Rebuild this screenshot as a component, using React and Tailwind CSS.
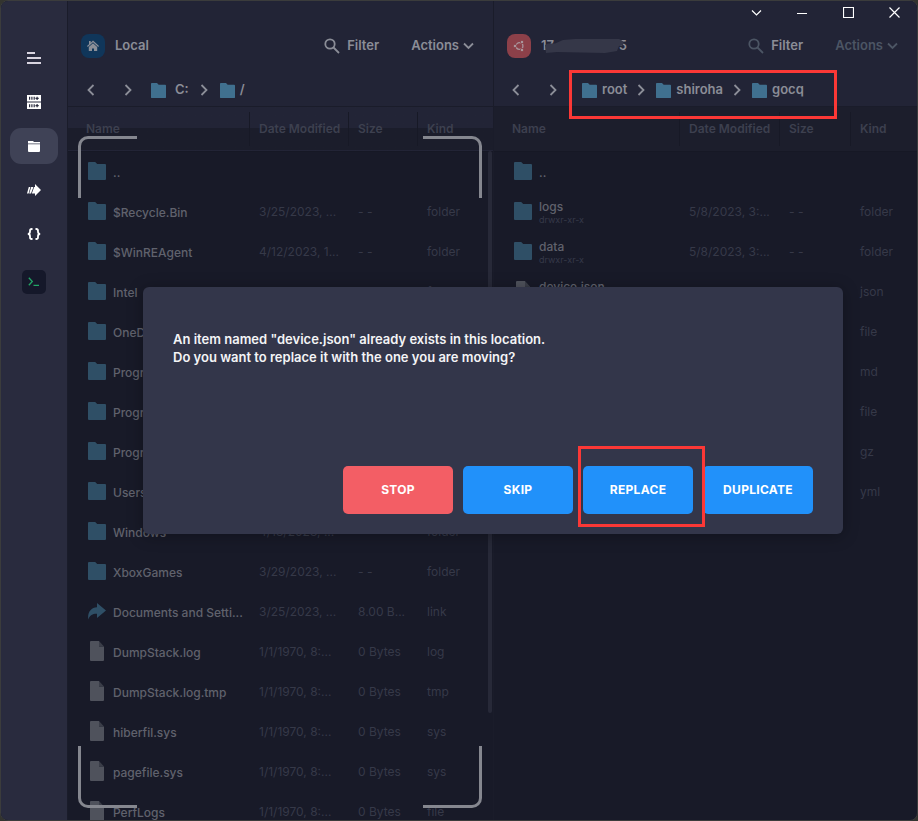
import React from "react";

const FONT = "font-['Inter','Liberation_Sans',sans-serif]";

const leftRows = [
  ["folder", "..", "", "", ""],
  ["folder", "$Recycle.Bin", "3/25/2023, ...", "- -", "folder"],
  ["folder", "$WinREAgent", "4/12/2023, 1...", "- -", "folder"],
  ["folder", "Intel", "3/25/2023, ...", "- -", "folder"],
  ["folder", "OneDriveTemp", "3/25/2023, ...", "- -", "folder"],
  ["folder", "Program Files", "3/25/2023, ...", "- -", "folder"],
  ["folder", "Program Files (x86)", "3/25/2023, ...", "- -", "folder"],
  ["folder", "ProgramData", "3/25/2023, ...", "- -", "folder"],
  ["folder", "Users", "3/25/2023, ...", "- -", "folder"],
  ["folder", "Windows", "4/13/2023, ...", "- -", "folder"],
  ["folder", "XboxGames", "3/29/2023, ...", "- -", "folder"],
  ["link", "Documents and Setti...", "3/25/2023, ...", "8.00 B...", "link"],
  ["file", "DumpStack.log", "1/1/1970, 8:...", "0 Bytes", "log"],
  ["file", "DumpStack.log.tmp", "1/1/1970, 8:...", "0 Bytes", "tmp"],
  ["file", "hiberfil.sys", "1/1/1970, 8:...", "0 Bytes", "sys"],
  ["file", "pagefile.sys", "1/1/1970, 8:...", "0 Bytes", "sys"],
  ["file", "PerfLogs", "1/1/1970, 8:...", "0 Bytes", "file"],
];

const rightRows = [
  ["folder", "..", "", "", "", ""],
  ["folder", "logs", "5/8/2023, 3:...", "- -", "folder", "drwxr-xr-x"],
  ["folder", "data", "5/8/2023, 3:...", "- -", "folder", "drwxr-xr-x"],
  ["file", "device.json", "5/8/2023, 3:...", "", "json", "-rw-r--r--"],
  ["file", "go-cqhttp", "5/8/2023, 3:...", "", "file", "-rwxr-xr-x"],
  ["file", "README.md", "5/8/2023, 3:...", "", "md", "-rw-r--r--"],
  ["file", "LICENSE", "5/8/2023, 3:...", "", "file", "-rw-r--r--"],
  ["file", "go-cqhttp.gz", "5/8/2023, 3:...", "", "gz", "-rw-r--r--"],
  ["file", "config.yml", "5/8/2023, 3:...", "", "yml", "-rw-r--r--"],
];

function Folder({ className }) {
  return (
    <svg className={className} viewBox="0 0 18 18" fill="currentColor" aria-hidden="true">
      <path d="M1 0h6.2l2 2H17a1 1 0 0 1 1 1v14a1 1 0 0 1-1 1H1a1 1 0 0 1-1-1V1a1 1 0 0 1 1-1z" />
    </svg>
  );
}

function FileIcon() {
  return (
    <svg className="h-5 w-[18px]" viewBox="0 0 18 20" aria-hidden="true">
      <path d="M3 0h8v5.5h5V19a1 1 0 0 1-1 1H3a1 1 0 0 1-1-1V1a1 1 0 0 1 1-1z" fill="#4f525c" />
      <path d="M11 0l5 5.5h-5z" fill="#3b3e49" />
    </svg>
  );
}

function LinkIcon() {
  return (
    <svg className="size-[18px] text-[#2f4f66]" viewBox="0 0 18 18" fill="currentColor" aria-hidden="true">
      <path d="M9 1l9 7.500L9 16v-4.300C5 11.500 2 13 .2 17.500-.5 10 3 5.600 9 5.300z" />
    </svg>
  );
}

function RowIcon({ type }) {
  if (type === "folder") return <Folder className="size-[18px] text-[#2f4f66]" />;
  if (type === "link") return <LinkIcon />;
  return <FileIcon />;
}

function Chevron({ dir, className = "" }) {
  const d = { left: "M7.500 1L2.500 6l5 5", right: "M2.500 1l5 5-5 5", down: "M1 3.500l4.500 4.500L10 3.500" }[dir];
  return (
    <svg className={"h-3 w-[11px] shrink-0 " + className} viewBox="0 0 11 12" fill="none" stroke="currentColor" strokeWidth="1.8" aria-hidden="true">
      <path d={d} />
    </svg>
  );
}

function PanelHeader({ badge, title, dim }) {
  const tone = dim ? "text-[#4c5564]" : "text-[#8b8d97]";
  return (
    <div className="flex h-8 items-center pr-[19px] text-[13px] font-semibold text-[#8b8d97]">
      {badge}
      <div className="ml-[10px] flex-1">{title}</div>
      <button className="flex items-center gap-[7px]">
        <svg className={"size-4 " + tone} viewBox="0 0 16 16" fill="none" stroke="currentColor" strokeWidth="1.8" aria-hidden="true">
          <circle cx="6" cy="6" r="4.700" />
          <path d="M9.500 9.500L15 15" />
        </svg>
        Filter
      </button>
      <button className={"ml-8 flex items-center gap-1 " + tone}>
        Actions
        <Chevron dir="down" />
      </button>
    </div>
  );
}

function Crumb({ children }) {
  return (
    <a href="#" className="flex items-center gap-[5px]">
      <Folder className="size-[15px] text-[#40708f]" />
      {children}
    </a>
  );
}

function NavButtons() {
  return (
    <div className="flex gap-[26px]">
      <button aria-label="Back"><Chevron dir="left" /></button>
      <button aria-label="Forward"><Chevron dir="right" /></button>
    </div>
  );
}

function FileTable({ rows, cols, headTone, label }) {
  return (
    <table aria-label={label} className="w-full table-fixed border-collapse text-left text-xs">
      <colgroup>
        <col />
        {cols.map((c, i) => <col key={i} className={c} />)}
      </colgroup>
      <thead>
        <tr className={"h-11 border-b border-[#161825] text-[#3d404f] " + headTone}>
          {["Name", "Date Modified", "Size", "Kind"].map((h, i) => (
            <th key={h} className={"whitespace-nowrap p-0 font-semibold " + (i ? "" : "pl-[18px]")}>
              <div className={i ? "border-l border-[#171926] py-[9px] pl-[9px]" : ""}>{h}</div>
            </th>
          ))}
        </tr>
      </thead>
      <tbody>
        {rows.map(([type, name, date, size, kind, mode], i) => (
          <tr key={i} className="h-10 text-[#363948]">
            <td className="p-0 pl-5">
              <div className="flex items-center gap-[7px]">
                <span className="shrink-0"><RowIcon type={type} /></span>
                <div className={"min-w-0 whitespace-nowrap leading-4 " + (mode ? "pt-px" : "pt-[3px]")}>
                  <div className="font-medium text-[#60626d]">{name}</div>
                  {mode && <div className="text-[9px] leading-[9px]">{mode}</div>}
                </div>
              </div>
            </td>
            <td className="whitespace-nowrap p-0 pl-[10px] pt-px">{date}</td>
            <td className="whitespace-nowrap p-0 pl-[10px] pt-px">{size}</td>
            <td className="whitespace-nowrap p-0 pl-[10px] pt-px">{kind}</td>
          </tr>
        ))}
      </tbody>
    </table>
  );
}

function DropTarget() {
  const corner = "absolute h-[62px] w-[59px] border-[#85878f] ";
  return (
    <div className="pointer-events-none absolute inset-x-0 bottom-0 top-[21px]">
      <div className="absolute bottom-3 left-[10px] right-[11px] top-2">
        <div className={corner + "left-0 top-0 rounded-tl-[10px] border-l-3 border-t-3"} />
        <div className={corner + "right-0 top-0 rounded-tr-[10px] border-r-3 border-t-3"} />
        <div className={corner + "bottom-0 left-0 rounded-bl-[10px] border-b-3 border-l-3"} />
        <div className={corner + "bottom-0 right-0 rounded-br-[10px] border-b-3 border-r-3"} />
      </div>
    </div>
  );
}

function WindowControls() {
  const icons = [
    ["More", "M1 3.500L5.500 8 10 3.500"],
    ["Minimize", "M0 6.500h10"],
    ["Maximize", "M.5.5h10v10H.5z"],
    ["Close", "M.5.5l10 10M10.500.5l-10 10"],
  ];
  return (
    <div className="flex h-[30px] justify-end">
      {icons.map(([label, d]) => (
        <button key={label} aria-label={label} className="flex h-[22px] w-[46px] items-center justify-center text-white">
          <svg className="size-[11px]" viewBox="0 0 11 11" fill="none" stroke="currentColor" strokeWidth="1.2"><path d={d} /></svg>
        </button>
      ))}
    </div>
  );
}

function Sidebar() {
  const item = "flex h-9 w-12 items-center justify-center rounded-[11px] text-white ";
  return (
    <nav className="flex w-[66px] shrink-0 flex-col items-center gap-2 bg-[#292b3e] pt-[39px]">
      <button aria-label="Menu" className={item}>
        <svg className="h-3 w-3.5" viewBox="0 0 14 12" stroke="#d8d4df" strokeWidth="1.800"><path d="M0 1h8M0 6h14M0 11h14" /></svg>
      </button>
      <button aria-label="Hosts" className={item}>
        <svg className="size-3.5" viewBox="0 0 14 14" fill="currentColor">
          <path fillRule="evenodd" d="M0 0h14v6.500H0zM2 1.800v3h1.200v-3zM4.300 1.800v3h1.200v-3zM6.600 1.800v3h1.200v-3zM9.500 2.700h-1v1.200h1v1h1.200v-1h1V2.700h-1v-1H9.500zM0 7.500h14V14H0zM2 9.200v3h1.200v-3zM4.300 9.200v3h1.200v-3zM6.600 9.200v3h1.200v-3zM9.500 10.100h-1v1.200h1v1h1.200v-1h1v-1.200h-1v-1H9.500z" />
        </svg>
      </button>
      <button aria-label="Files" aria-current="page" className={item + "bg-[#3f4256]"}>
        <svg className="h-[11px] w-3" viewBox="0 0 12 11" fill="currentColor"><path d="M0 0h5l1 1h6v1.500H0zM0 3.300h12V10a1 1 0 0 1-1 1H1a1 1 0 0 1-1-1z" /></svg>
      </button>
      <button aria-label="Port forwarding" className={item}>
        <svg className="h-3 w-3.5" viewBox="0 0 14 12" fill="currentColor"><path d="M8 0l6 6-6 6V9.500H4.800L7.200 3H8zM1.800 3h1.600L1.600 9.500H0zM4.200 3h2.200L4 9.500H2.200z" /></svg>
      </button>
      <button aria-label="Snippets" className={item}>
        <svg className="h-3 w-3.5" viewBox="0 0 14 12" fill="none" stroke="currentColor" strokeWidth="1.800"><path d="M5.500 1H4.800Q3 1 3 2.800v1Q3 6 .8 6 3 6 3 8.200v1Q3 11 4.800 11h.7M8.500 1h.7Q11 1 11 2.800v1Q11 6 13.200 6 11 6 11 8.200v1Q11 11 9.200 11h-.7" /></svg>
      </button>
      <button aria-label="Terminal" className="mt-[10px] flex size-6 items-center justify-center rounded-[5px] bg-[#15182a]">
        <svg className="h-2.5 w-3" viewBox="0 0 12 10" fill="none" stroke="#22a565" strokeWidth="1.300"><path d="M.8.8l3.500 3.700L.8 8.200M5.500 8.300H11" /></svg>
      </button>
    </nav>
  );
}

function Dialog() {
  const btn = "relative h-12 w-[110px] rounded-[5px] text-xs font-bold tracking-wide text-white ";
  return (
    <div className="pointer-events-none absolute inset-y-0 left-0.5 right-0 flex items-center justify-center">
      <div role="dialog" aria-modal="true" aria-labelledby="dialog-message" className="pointer-events-auto flex min-h-[247px] w-[700px] flex-col justify-between rounded-md bg-[#33364a] px-[30px] pb-5 pt-[43px] shadow-[0_2px_16px_rgba(0,0,0,0.3)]">
        <p id="dialog-message" className="text-[13px] font-semibold leading-[18px] text-[#f4f4f6]">
          An item named "device.json" already exists in this location.
          <br />
          Do you want to replace it with the one you are moving?
        </p>
        <div className="flex justify-end gap-[10px]">
          <button className={btn + "bg-[#f35e65]"}>STOP</button>
          <button className={btn + "bg-[#2191fa]"}>SKIP</button>
          <button className={btn + "z-10 bg-[#2191fa]"}>
            REPLACE
            <span className="absolute -bottom-[13px] -left-[5px] -right-3 -top-5 border-3 border-[#fb3836]" />
          </button>
          <button className={btn + "bg-[#2191fa]"}>DUPLICATE</button>
        </div>
      </div>
    </div>
  );
}

export default function App() {
  return (
    <div className={"h-screen overflow-hidden bg-[#33342f] " + FONT}>
      <div className="flex h-full overflow-hidden rounded-lg border border-[#3b3c3c] bg-[#181a28]">
        <Sidebar />
        <main className="relative grid min-w-0 flex-1 grid-cols-[427fr_423fr]">
          <section className="flex min-h-0 min-w-0 flex-col overflow-hidden border-x border-[#1a1c2a]">
            <div className="h-[106px] shrink-0 border-b border-[#1a1c2a] bg-[#222436] pl-[13px] pt-[29px]">
              <PanelHeader
                title="Local"
                badge={
                  <span className="flex size-6 items-center justify-center rounded-lg bg-[#10365a]">
                    <svg className="size-3" viewBox="0 0 12 12" fill="#8b8f98"><path d="M6 .5L12 6l-.8.9L6 2.200.8 6.900 0 6l2-1.800V1h1.700v1.700zM6 3.200l4.200 3.800V11H7V8.500H5V11H1.800V7z" /></svg>
                  </span>
                }
              />
              <div className="mt-3 flex h-8 items-center pl-[5px] text-[13px] font-semibold text-[#8b8d97]">
                <NavButtons />
                <div className="ml-[17px] flex items-center gap-[10px]">
                  <Crumb><span className="pl-1">C:</span></Crumb>
                  <Chevron dir="right" />
                  <Crumb>/</Crumb>
                </div>
              </div>
            </div>
            <div className="relative min-h-0 flex-1">
              <div className="h-full overflow-hidden">
                <FileTable label="Local files" rows={leftRows} cols={["w-[99px]", "w-[69px]", "w-[76px]"]} headTone="bg-linear-to-b from-[#222436] from-48% to-[#1b1d2b] to-48%" />
              </div>
              <div className="absolute right-px top-11 h-[562px] w-1 rounded bg-[#272938]" />
              <DropTarget />
            </div>
          </section>
          <section className="flex min-h-0 min-w-0 flex-col overflow-hidden">
            <div className="h-[106px] shrink-0 border-b border-[#1a1c2a] bg-[#222436]">
              <WindowControls />
              <div className="-mt-px pl-[13px]">
                <PanelHeader
                  dim
                  title={
                    <span className="relative inline-flex w-[86px] justify-between">
                      <span>17</span>
                      <span>5</span>
                      <svg className="absolute left-1 top-0.5 h-4 w-20" viewBox="0 0 80 16" fill="#353748" aria-hidden="true"><path d="M0 7l3-1.500h7L18 2l12-1h44q6 2 4 6l-4 1-2 5-12 2-48-1-11 1z" /></svg>
                    </span>
                  }
                  badge={
                    <span className="flex size-6 items-center justify-center rounded-lg bg-[#8c4049]">
                      <svg className="size-3" viewBox="0 0 12 12" aria-hidden="true">
                        <circle cx="6.500" cy="6" r="3.400" fill="none" stroke="#a9959c" strokeWidth="1.300" />
                        <g fill="#a9959c" stroke="#8c4049" strokeWidth=".8">
                          <circle cx="2" cy="6" r="1.700" />
                          <circle cx="9" cy="2" r="1.700" />
                          <circle cx="9" cy="10" r="1.700" />
                        </g>
                      </svg>
                    </span>
                  }
                />
                <div className="mt-3 flex h-8 items-center pl-1 text-[13px] font-semibold text-[#8b8d97]">
                  <NavButtons />
                  <div className="relative ml-[23px] flex items-center gap-[9px]">
                    <Crumb>root</Crumb>
                    <Chevron dir="right" />
                    <Crumb>shiroha</Crumb>
                    <Chevron dir="right" />
                    <Crumb>gocq</Crumb>
                    <span className="pointer-events-none absolute -left-[13px] -top-[10px] z-20 h-[49px] w-[268px] border-3 border-[#fb3836]" />
                  </div>
                </div>
              </div>
            </div>
            <FileTable label="Remote files" rows={rightRows} cols={["w-[100px]", "w-[71px]", "w-[67px]"]} headTone="bg-[#1c1e2c]" />
          </section>
          <Dialog />
        </main>
      </div>
    </div>
  );
}
